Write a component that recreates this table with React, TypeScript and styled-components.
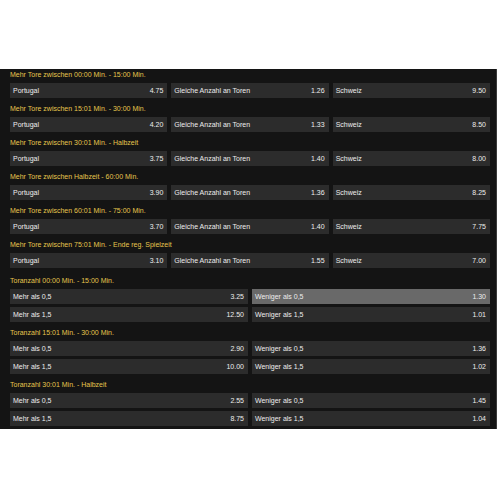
import React from "react";
import styled, { createGlobalStyle } from "styled-components";

const Global = createGlobalStyle`
  html, body { margin: 0; padding: 0; background: #ffffff; }
  body { font-family: "Liberation Sans", Arial, sans-serif; }
`;

const Page = styled.div`
  padding-top: 69px;
  width: 500px;
  height: 500px;
  box-sizing: border-box;
`;

const Panel = styled.div`
  width: 497px;
  background: #141414;
  border-right: 1px solid #3a3a3a;
  box-sizing: border-box;
  padding: 0 6px 0 10px;
  display: flex;
  flex-direction: column;
`;

const Section = styled.section<{ $top: number; $bottom: number }>`
  display: flex;
  flex-direction: column;
  padding-top: ${(p) => p.$top}px;
  padding-bottom: ${(p) => p.$bottom}px;
`;

const Title = styled.div`
  color: #e6c64e;
  font-size: 7px;
  line-height: 12px;
  height: 12px;
  margin-bottom: 2px;
  white-space: nowrap;
`;

const Grid = styled.div<{ $cols: number }>`
  display: grid;
  grid-template-columns: repeat(${(p) => p.$cols}, 1fr);
  column-gap: 4px;
  row-gap: 3px;
`;

const Cell = styled.div<{ $active?: boolean }>`
  height: 15px;
  background: ${(p) => (p.$active ? "#696969" : "#2c2c2c")};
  color: #ededed;
  font-size: 7px;
  display: flex;
  align-items: center;
  justify-content: space-between;
  padding: 0 4px 0 3px;
  white-space: nowrap;
`;

const Name = styled.span``;
const Odd = styled.span``;

type Sel = { name: string; odd: string; active?: boolean };

const tore: { title: string; odds: [string, string, string] }[] = [
  { title: "Mehr Tore zwischen 00:00 Min. - 15:00 Min.", odds: ["4.75", "1.26", "9.50"] },
  { title: "Mehr Tore zwischen 15:01 Min. - 30:00 Min.", odds: ["4.20", "1.33", "8.50"] },
  { title: "Mehr Tore zwischen 30:01 Min. - Halbzeit", odds: ["3.75", "1.40", "8.00"] },
  { title: "Mehr Tore zwischen Halbzeit - 60:00 Min.", odds: ["3.90", "1.36", "8.25"] },
  { title: "Mehr Tore zwischen 60:01 Min. - 75:00 Min.", odds: ["3.70", "1.40", "7.75"] },
  { title: "Mehr Tore zwischen 75:01 Min. - Ende reg. Spielzeit", odds: ["3.10", "1.55", "7.00"] },
];

const anzahl: { title: string; sels: Sel[] }[] = [
  {
    title: "Toranzahl 00:00 Min. - 15:00 Min.",
    sels: [
      { name: "Mehr als 0,5", odd: "3.25" },
      { name: "Weniger als 0,5", odd: "1.30", active: true },
      { name: "Mehr als 1,5", odd: "12.50" },
      { name: "Weniger als 1,5", odd: "1.01" },
    ],
  },
  {
    title: "Toranzahl 15:01 Min. - 30:00 Min.",
    sels: [
      { name: "Mehr als 0,5", odd: "2.90" },
      { name: "Weniger als 0,5", odd: "1.36" },
      { name: "Mehr als 1,5", odd: "10.00" },
      { name: "Weniger als 1,5", odd: "1.02" },
    ],
  },
  {
    title: "Toranzahl 30:01 Min. - Halbzeit",
    sels: [
      { name: "Mehr als 0,5", odd: "2.55" },
      { name: "Weniger als 0,5", odd: "1.45" },
      { name: "Mehr als 1,5", odd: "8.75" },
      { name: "Weniger als 1,5", odd: "1.04" },
    ],
  },
];

export default function App() {
  return (
    <Page>
      <Global />
      <Panel>
        {tore.map((m) => (
          <Section key={m.title} $top={0} $bottom={5}>
            <Title>{m.title}</Title>
            <Grid $cols={3}>
              <Cell><Name>Portugal</Name><Odd>{m.odds[0]}</Odd></Cell>
              <Cell><Name>Gleiche Anzahl an Toren</Name><Odd>{m.odds[1]}</Odd></Cell>
              <Cell><Name>Schweiz</Name><Odd>{m.odds[2]}</Odd></Cell>
            </Grid>
          </Section>
        ))}
        {anzahl.map((m) => (
          <Section key={m.title} $top={2} $bottom={3}>
            <Title>{m.title}</Title>
            <Grid $cols={2}>
              {m.sels.map((s) => (
                <Cell key={s.name} $active={s.active}>
                  <Name>{s.name}</Name>
                  <Odd>{s.odd}</Odd>
                </Cell>
              ))}
            </Grid>
          </Section>
        ))}
      </Panel>
    </Page>
  );
}
